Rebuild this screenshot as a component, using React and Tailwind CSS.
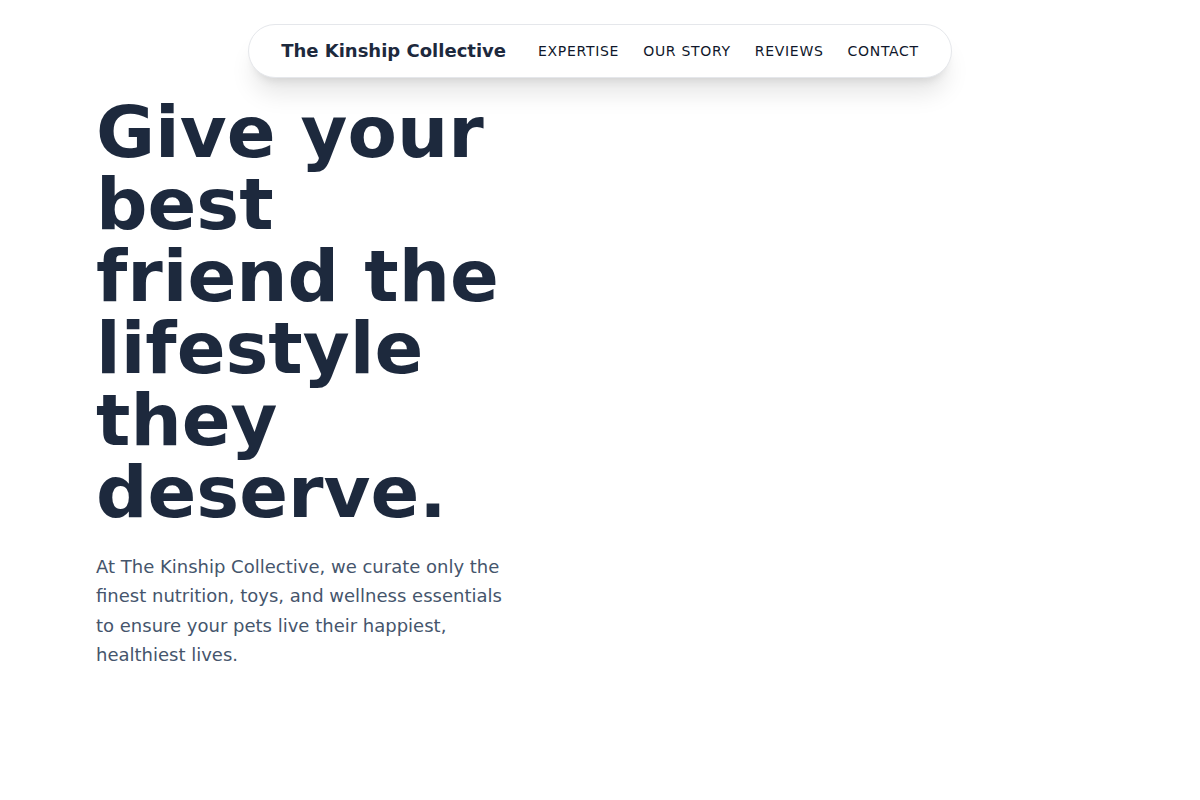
export default function App() {
  return (
    <div className="min-h-[800px] bg-white" style={{ fontFamily: '"DejaVu Sans", sans-serif' }}>
      <header className="flex justify-center pt-6">
        <nav className="flex items-center gap-8 rounded-full border border-gray-200 bg-white px-8 py-3 shadow-xl">
          <span className="text-lg font-bold text-slate-800">The Kinship Collective</span>
          <ul className="flex items-center gap-6 text-sm uppercase tracking-wider text-slate-900">
            <li>Expertise</li>
            <li>Our Story</li>
            <li>Reviews</li>
            <li>Contact</li>
          </ul>
        </nav>
      </header>
      <main className="px-24 pt-[18px]">
        <div className="max-w-[416px]">
          <h1 className="text-7xl font-bold leading-none text-slate-800">
            Give your best friend the lifestyle they deserve.
          </h1>
          <p className="mt-6 text-lg leading-relaxed text-slate-600">
            At The Kinship Collective, we curate only the finest nutrition, toys, and wellness essentials to ensure your pets live their happiest, healthiest lives.
          </p>
        </div>
      </main>
    </div>
  );
}
